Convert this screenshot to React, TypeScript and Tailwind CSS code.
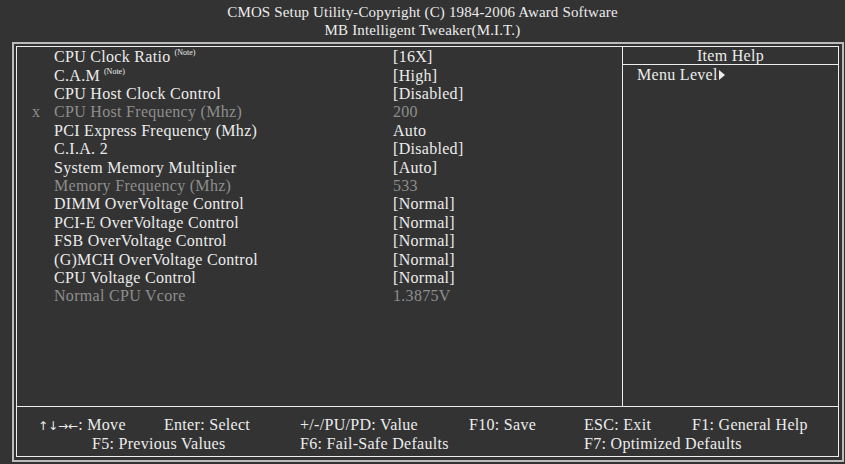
type Row = {
  label: string;
  value: string;
  note?: boolean;
  off?: boolean;
  mark?: string;
};

const rows: Row[] = [
  { label: "CPU Clock Ratio", value: "[16X]", note: true },
  { label: "C.A.M", value: "[High]", note: true },
  { label: "CPU Host Clock Control", value: "[Disabled]" },
  { label: "CPU Host Frequency (Mhz)", value: "200", off: true, mark: "x" },
  { label: "PCI Express Frequency (Mhz)", value: "Auto" },
  { label: "C.I.A. 2", value: "[Disabled]" },
  { label: "System Memory Multiplier", value: "[Auto]" },
  { label: "Memory Frequency (Mhz)", value: "533", off: true },
  { label: "DIMM OverVoltage Control", value: "[Normal]" },
  { label: "PCI-E OverVoltage Control", value: "[Normal]" },
  { label: "FSB OverVoltage Control", value: "[Normal]" },
  { label: "(G)MCH OverVoltage Control", value: "[Normal]" },
  { label: "CPU Voltage Control", value: "[Normal]" },
  { label: "Normal CPU Vcore", value: "1.3875V", off: true },
];

function SettingRow({ row }: { row: Row }) {
  return (
    <div className={`flex h-[18.4px] items-center ${row.off ? "text-[#8e8e8e]" : "text-[#ececec]"}`}>
      <span className="w-[37px] pl-[15px]">{row.mark ?? ""}</span>
      <span className="w-[339px] whitespace-nowrap">
        {row.label}
        {row.note && <sup className="ml-[4px] text-[8px] tracking-normal align-[3px]">(Note)</sup>}
      </span>
      <span>{row.value}</span>
    </div>
  );
}

export default function App() {
  return (
    <div className="w-[845px] h-[464px] bg-[#333333] text-[16px] tracking-[0.3px] text-[#ececec] font-['Liberation_Serif',serif] overflow-hidden">
      <header className="h-[42px] flex flex-col items-center pt-[3px] leading-[18px] text-[15px] tracking-[0.15px]">
        <p>CMOS Setup Utility-Copyright (C) 1984-2006 Award Software</p>
        <p>MB Intelligent Tweaker(M.I.T.)</p>
      </header>

      <div className="ml-[12px] w-[832px] h-[420px] border-2 border-[#bcbcbc] pt-[2px] pl-[2px] pr-[3px] pb-[3px]">
        <div className="h-full border border-[#ededed] flex flex-col">
          <div className="h-[360px] flex border-b border-[#ededed]">
            <div className="w-[606px] border-r border-[#ededed] pt-[1px]">
              {rows.map((row) => (
                <SettingRow key={row.label} row={row} />
              ))}
            </div>
            <div className="flex-1 flex flex-col">
              <div className="h-[18px] border-b border-[#ededed] flex items-center justify-center">
                Item Help
              </div>
              <div className="flex items-center pl-[14px] h-[19px]">
                Menu Level
                <svg width="6" height="10" viewBox="0 0 6 10" className="ml-[1px]">
                  <path d="M0 0 L6 5 L0 10 Z" fill="#ececec" />
                </svg>
              </div>
            </div>
          </div>

          <footer className="flex-1 pt-[9px] leading-[18px] whitespace-nowrap">
            <div className="flex pl-[21px]">
              <span className="w-[126px]">
                <span className="font-['DejaVu_Sans',sans-serif] text-[12px] tracking-[0px]">↑↓→←</span>: Move
              </span>
              <span className="w-[136px]">Enter: Select</span>
              <span className="w-[169px]">+/-/PU/PD: Value</span>
              <span className="w-[115px]">F10: Save</span>
              <span className="w-[108px]">ESC: Exit</span>
              <span>F1: General Help</span>
            </div>
            <div className="flex pl-[75px]">
              <span className="w-[208px]">F5: Previous Values</span>
              <span className="w-[284px]">F6: Fail-Safe Defaults</span>
              <span>F7: Optimized Defaults</span>
            </div>
          </footer>
        </div>
      </div>
    </div>
  );
}
